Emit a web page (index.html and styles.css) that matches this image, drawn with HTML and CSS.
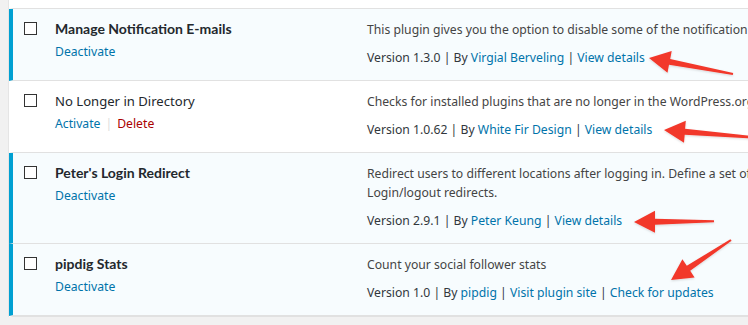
FILE: index.html
```html
<!DOCTYPE html>
<html lang="en">
<head>
    <meta charset="UTF-8">
    <title>Plugins</title>
    <link rel="stylesheet" href="styles.css">
</head>
<body>
    <div class="plugins">
        <div class="plugin-row prev"></div>

        <div class="plugin-row active">
            <div class="check-col"><span class="checkbox"></span></div>
            <div class="title-col">
                <strong class="plugin-name">Manage Notification E-mails</strong>
                <div class="row-actions"><a href="#">Deactivate</a></div>
            </div>
            <div class="desc-col">
                <p class="desc">This plugin gives you the option to disable some of the notification e-mails send by WordPress.</p>
                <div class="version">Version 1.3.0 | By <a href="#">Virgial Berveling</a> | <a href="#">View details</a></div>
            </div>
        </div>

        <div class="plugin-row inactive">
            <div class="check-col"><span class="checkbox"></span></div>
            <div class="title-col">
                <strong class="plugin-name">No Longer in Directory</strong>
                <div class="row-actions"><a href="#">Activate</a><span class="sep">|</span><a href="#" class="delete">Delete</a></div>
            </div>
            <div class="desc-col">
                <p class="desc">Checks for installed plugins that are no longer in the WordPress.org Plugin Directory.</p>
                <div class="version">Version 1.0.62 | By <a href="#">White Fir Design</a> | <a href="#">View details</a></div>
            </div>
        </div>

        <div class="plugin-row active">
            <div class="check-col"><span class="checkbox"></span></div>
            <div class="title-col">
                <strong class="plugin-name">Peter's Login Redirect</strong>
                <div class="row-actions"><a href="#">Deactivate</a></div>
            </div>
            <div class="desc-col">
                <p class="desc">Redirect users to different locations after logging in. Define a set of rules for specific users, users with specific roles, users with specific capabilities, and a blanket rule for all other users. This is all managed in Settings &gt;<br>Login/logout redirects.</p>
                <div class="version">Version 2.9.1 | By <a href="#">Peter Keung</a> | <a href="#">View details</a></div>
            </div>
        </div>

        <div class="plugin-row active">
            <div class="check-col"><span class="checkbox"></span></div>
            <div class="title-col">
                <strong class="plugin-name">pipdig Stats</strong>
                <div class="row-actions"><a href="#">Deactivate</a></div>
            </div>
            <div class="desc-col">
                <p class="desc">Count your social follower stats</p>
                <div class="version">Version 1.0 | By <a href="#">pipdig</a> | <a href="#">Visit plugin site</a> | <a href="#">Check for updates</a></div>
            </div>
        </div>

        <div class="plugin-row inactive"></div>
    </div>

    <!-- red arrows drawn over the screenshot -->
    <svg class="arrows" width="748" height="325" viewBox="0 0 748 325">
        <defs>
            <filter id="soft" x="-10%" y="-30%" width="120%" height="160%">
                <feDropShadow dx="0" dy="1" stdDeviation="0.8" flood-color="#000" flood-opacity="0.15"/>
            </filter>
        </defs>
        <g fill="#f2372b" filter="url(#soft)">
            <polygon points="649,58 671.7,51.1 670.2,59 733.2,73 732.8,75 669,64.8 667.5,72.7"/>
            <polygon points="664,130 685.8,120.7 685.1,128.7 752.1,136 751.9,138.4 684.7,134.7 684,142.7"/>
            <polygon points="634,222 655,210.7 655,218.7 714,220.2 714,222.2 655,224.7 655,232.7"/>
            <polygon points="671,280 682.4,259.2 686.8,265.8 730.4,239.2 731.6,240.8 690.2,270.8 694.6,277.5"/>
        </g>
    </svg>
</body>
</html>
```

FILE: styles.css
```css
html, body {
    overflow: hidden;
}
body {
    margin: 0;
    background: #f1f1f1;
    font-family: "Noto Sans", "Open Sans", sans-serif;
    font-size: 12.2px;
    color: #444;
    position: relative;
    height: 325px;
}
a {
    color: #0073aa;
    text-decoration: none;
}
.plugins {
    margin-left: 8px;
    border-left: 1px solid #e5e5e5;
    width: 1000px;
    background: #fff;
}
.plugin-row {
    display: flex;
    border-bottom: 1px solid #e1e1e1;
    border-left: 4px solid transparent;
    background: #fff;
}
.plugin-row.prev {
    height: 8px;
}
.plugin-row.active {
    background: #f7fcfe;
    border-left-color: #00a0d2;
}
.check-col {
    width: 42px;
    flex-shrink: 0;
    padding-top: 13px;
}
.checkbox {
    display: block;
    width: 11px;
    height: 11px;
    margin-left: 11px;
    border: 1px solid #333;
    background: #fff;
}
.title-col {
    width: 312px;
    flex-shrink: 0;
    padding-top: 10px;
}
.plugin-name {
    display: block;
    font-family: "Lato", "Noto Sans", sans-serif;
    font-size: 14px;
    line-height: 20px;
    color: #23282d;
}
.inactive .plugin-name {
    font-family: "Noto Sans", sans-serif;
    font-size: 13.1px;
    font-weight: normal;
}
.row-actions {
    margin-top: 3px;
    line-height: 20px;
}
.row-actions .sep {
    color: #ddd;
    margin: 0 5px;
}
.row-actions .delete {
    color: #a00;
}
.desc-col {
    flex: 1;
    min-width: 0;
    padding: 11px 0 12px;
    white-space: nowrap;
}
.desc {
    margin: 0 0 9px;
    line-height: 19px;
}
.version {
    line-height: 20px;
    color: #32373c;
}
.arrows {
    position: absolute;
    top: 0;
    left: 0;
    pointer-events: none;
}
```
